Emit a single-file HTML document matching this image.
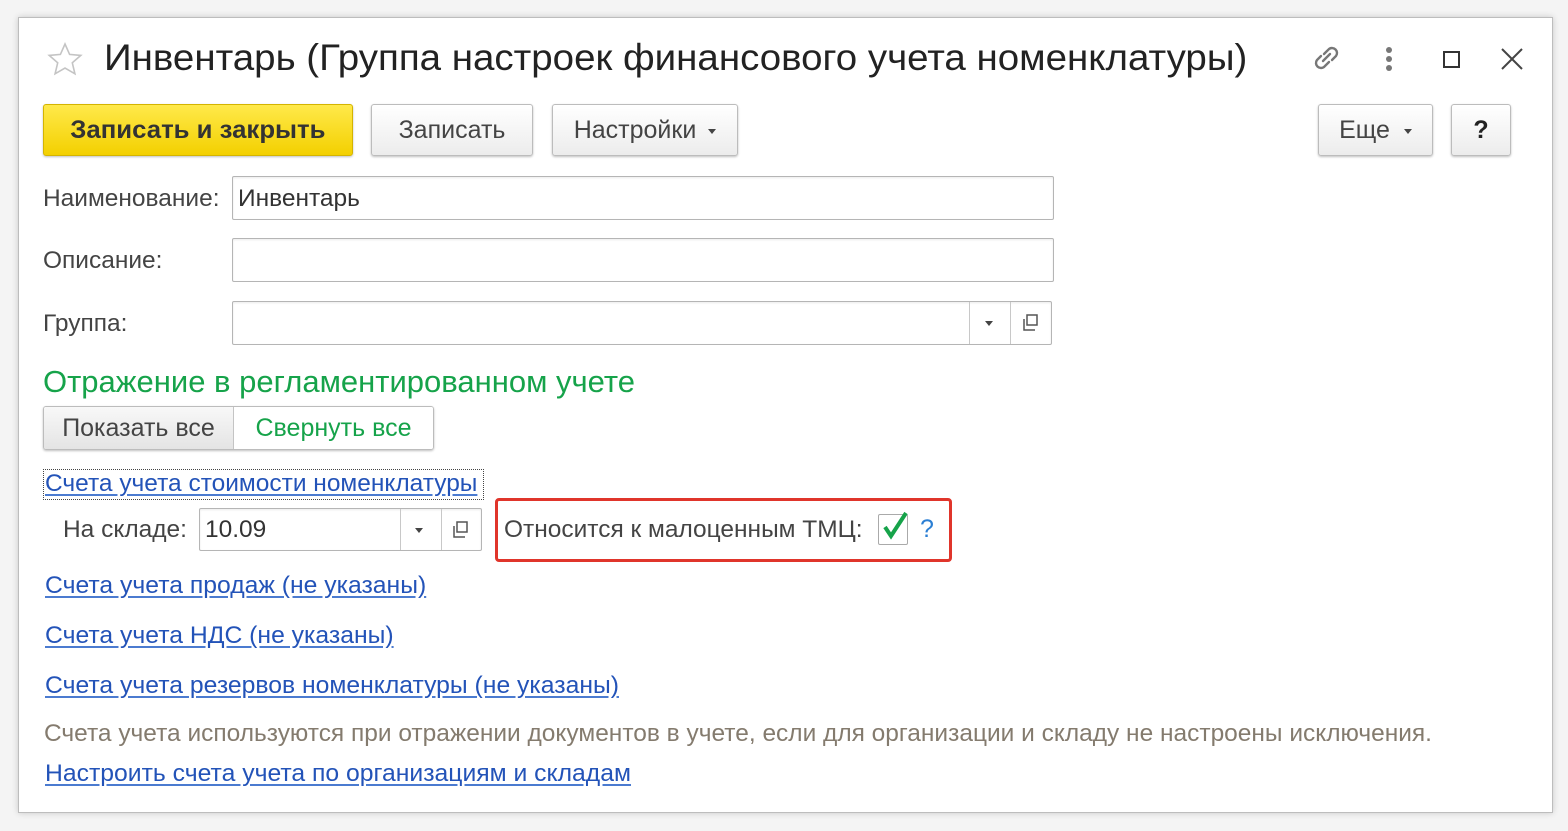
<!DOCTYPE html>
<html><head><meta charset="utf-8"><style>
*{margin:0;padding:0;box-sizing:border-box}
body{width:1568px;height:831px;background:#f4f4f4;font-family:"Liberation Sans",sans-serif;position:relative;overflow:hidden}
.win{position:absolute;left:18px;top:17px;width:1535px;height:796px;background:#fff;border:1px solid #bdbdbd;box-shadow:0 0 6px rgba(0,0,0,.18)}
.a{position:absolute;white-space:nowrap;transform-origin:0 50%}
.btn{position:absolute;border:1px solid #bcbcbc;border-radius:3px;background:linear-gradient(#fff,#ececec);box-shadow:0 1px 2px rgba(0,0,0,.25);color:#444;font-size:25px;display:flex;align-items:center;justify-content:center}
.inp{position:absolute;border:1px solid #b5b5b5;border-radius:2px;background:#fff;box-shadow:inset 0 1px 2px rgba(0,0,0,.08)}
.lbl{font-size:24px;color:#444}
.lnk{font-size:24px;color:#2353b8;text-decoration:underline;text-underline-offset:3px;text-decoration-color:#4b7bd0}
.dd{position:absolute;top:0;bottom:0;border-left:1px solid #c8c8c8}
.tri{position:absolute;width:0;height:0;border-left:4px solid transparent;border-right:4px solid transparent;border-top:5px solid #444}
</style></head><body>
<div class="win"></div>
<svg class="a" style="left:47px;top:42px" width="36" height="34" viewBox="0 0 36 34"><path d="M18 2l4.6 10.4 11.2 1-8.5 7.4 2.6 11L18 26l-9.9 5.8 2.6-11L2.2 13.4l11.2-1z" fill="none" stroke="#c4c4c4" stroke-width="1.6"/></svg>
<div class="a" style="left:104px;top:37px;font-size:37px;color:#222;transform:scaleX(1.04)">Инвентарь (Группа настроек финансового учета номенклатуры)</div>
<svg class="a" style="left:1310px;top:42px" width="34" height="32" viewBox="0 0 34 32"><g fill="none" stroke="#777" stroke-width="2.4" stroke-linecap="round"><path d="M14 12l5-5a5 5 0 0 1 7 7l-4 4"/><path d="M19 20l-5 5a5 5 0 0 1-7-7l4-4"/><path d="M13 19l7-7"/></g></svg>
<div class="a" style="left:1386px;top:47px;width:6px;height:6px;border-radius:3px;background:#777;box-shadow:0 9px 0 #777,0 18px 0 #777"></div>
<div class="a" style="left:1443px;top:51px;width:17px;height:17px;border:2px solid #333"></div>
<svg class="a" style="left:1500px;top:47px" width="24" height="24" viewBox="0 0 24 24"><path d="M2 2l20 20M22 2L2 22" stroke="#444" stroke-width="2"/></svg>
<div class="btn" style="left:43px;top:104px;width:310px;height:52px;background:linear-gradient(#ffe94a,#f3d000);border-color:#d4b400;color:#333;font-weight:bold"><span style="transform:scaleX(1.03);display:inline-block">Записать и закрыть</span></div>
<div class="btn" style="left:371px;top:104px;width:162px;height:52px"><span style="display:inline-block">Записать</span></div>
<div class="btn" style="left:552px;top:104px;width:186px;height:52px"><span style="display:inline-block">Настройки</span><span class="tri" style="position:relative;margin-left:12px;top:1px"></span></div>
<div class="btn" style="left:1318px;top:104px;width:115px;height:52px"><span style="display:inline-block">Еще</span><span class="tri" style="position:relative;margin-left:14px;top:1px"></span></div>
<div class="btn" style="left:1451px;top:104px;width:60px;height:52px;color:#222;font-weight:bold">?</div>
<div class="a lbl" style="left:43px;top:185px;transform:scaleX(1.02)">Наименование:</div>
<div class="inp" style="left:232px;top:176px;width:822px;height:44px"></div>
<div class="a lbl" style="left:238px;top:185px;color:#333;transform:scaleX(1.02)">Инвентарь</div>
<div class="a lbl" style="left:43px;top:247px;transform:scaleX(1.02)">Описание:</div>
<div class="inp" style="left:232px;top:238px;width:822px;height:44px"></div>
<div class="a lbl" style="left:43px;top:310px;transform:scaleX(1.02)">Группа:</div>
<div class="inp" style="left:232px;top:301px;width:820px;height:44px"><div class="dd" style="left:736px"></div><div class="dd" style="left:777px"></div><div class="tri" style="left:752px;top:19px"></div>
<svg style="position:absolute;left:787px;top:11px" width="20" height="20" viewBox="0 0 20 20"><g fill="none" stroke="#555" stroke-width="1.5"><rect x="7" y="2" width="10" height="10"/><path d="M4 6v11h11"/></g></svg></div>
<div class="a" style="left:43px;top:364px;font-size:31px;color:#16a34a;transform:scaleX(1.0)">Отражение в регламентированном учете</div>
<div class="btn" style="left:43px;top:406px;width:391px;height:44px;justify-content:flex-start;overflow:hidden">
<div style="width:190px;height:100%;background:linear-gradient(#f8f8f8,#e4e4e4);border-right:1px solid #c4c4c4;display:flex;align-items:center;justify-content:center"><span style="display:inline-block">Показать все</span></div>
<div style="flex:1;height:100%;background:#fff;display:flex;align-items:center;justify-content:center;color:#16a34a"><span style="display:inline-block">Свернуть все</span></div></div>
<div class="a" style="left:43px;top:469px;width:441px;height:31px;border:1px dotted #444"></div>
<div class="a lnk" style="left:45px;top:470px;transform:scaleX(1.02)">Счета учета стоимости номенклатуры</div>
<div class="a lbl" style="left:63px;top:516px;transform:scaleX(1.02)">На складе:</div>
<div class="inp" style="left:199px;top:508px;width:283px;height:43px"><div class="dd" style="left:200px"></div><div class="dd" style="left:241px"></div><div class="tri" style="left:215px;top:19px"></div>
<svg style="position:absolute;left:250px;top:11px" width="20" height="20" viewBox="0 0 20 20"><g fill="none" stroke="#555" stroke-width="1.5"><rect x="7" y="2" width="10" height="10"/><path d="M4 6v11h11"/></g></svg></div>
<div class="a lbl" style="left:205px;top:516px;color:#333;transform:scaleX(1.02)">10.09</div>
<div class="a" style="left:495px;top:498px;width:457px;height:64px;border:3px solid #e0352b;border-radius:4px"></div>
<div class="a lbl" style="left:504px;top:516px;transform:scaleX(1.02)">Относится к малоценным ТМЦ:</div>
<div class="a" style="left:878px;top:514px;width:30px;height:31px;border:1px solid #aaa;border-radius:2px;background:#fff"></div>
<svg class="a" style="left:880px;top:510px" width="30" height="32" viewBox="0 0 30 32"><path d="M5 17l6 9L26 3" fill="none" stroke="#16a34a" stroke-width="4"/></svg>
<div class="a" style="left:920px;top:515px;font-size:25px;color:#2b7fd4">?</div>
<div class="a lnk" style="left:45px;top:572px;transform:scaleX(1.03)">Счета учета продаж (не указаны)</div>
<div class="a lnk" style="left:45px;top:622px;transform:scaleX(1.03)">Счета учета НДС (не указаны)</div>
<div class="a lnk" style="left:45px;top:672px;transform:scaleX(1.03)">Счета учета резервов номенклатуры (не указаны)</div>
<div class="a" style="left:44px;top:720px;font-size:24px;color:#847b6e;transform:scaleX(1.02)">Счета учета используются при отражении документов в учете, если для организации и складу не настроены исключения.</div>
<div class="a lnk" style="left:45px;top:760px;transform:scaleX(1.03)">Настроить счета учета по организациям и складам</div>
</body></html>
